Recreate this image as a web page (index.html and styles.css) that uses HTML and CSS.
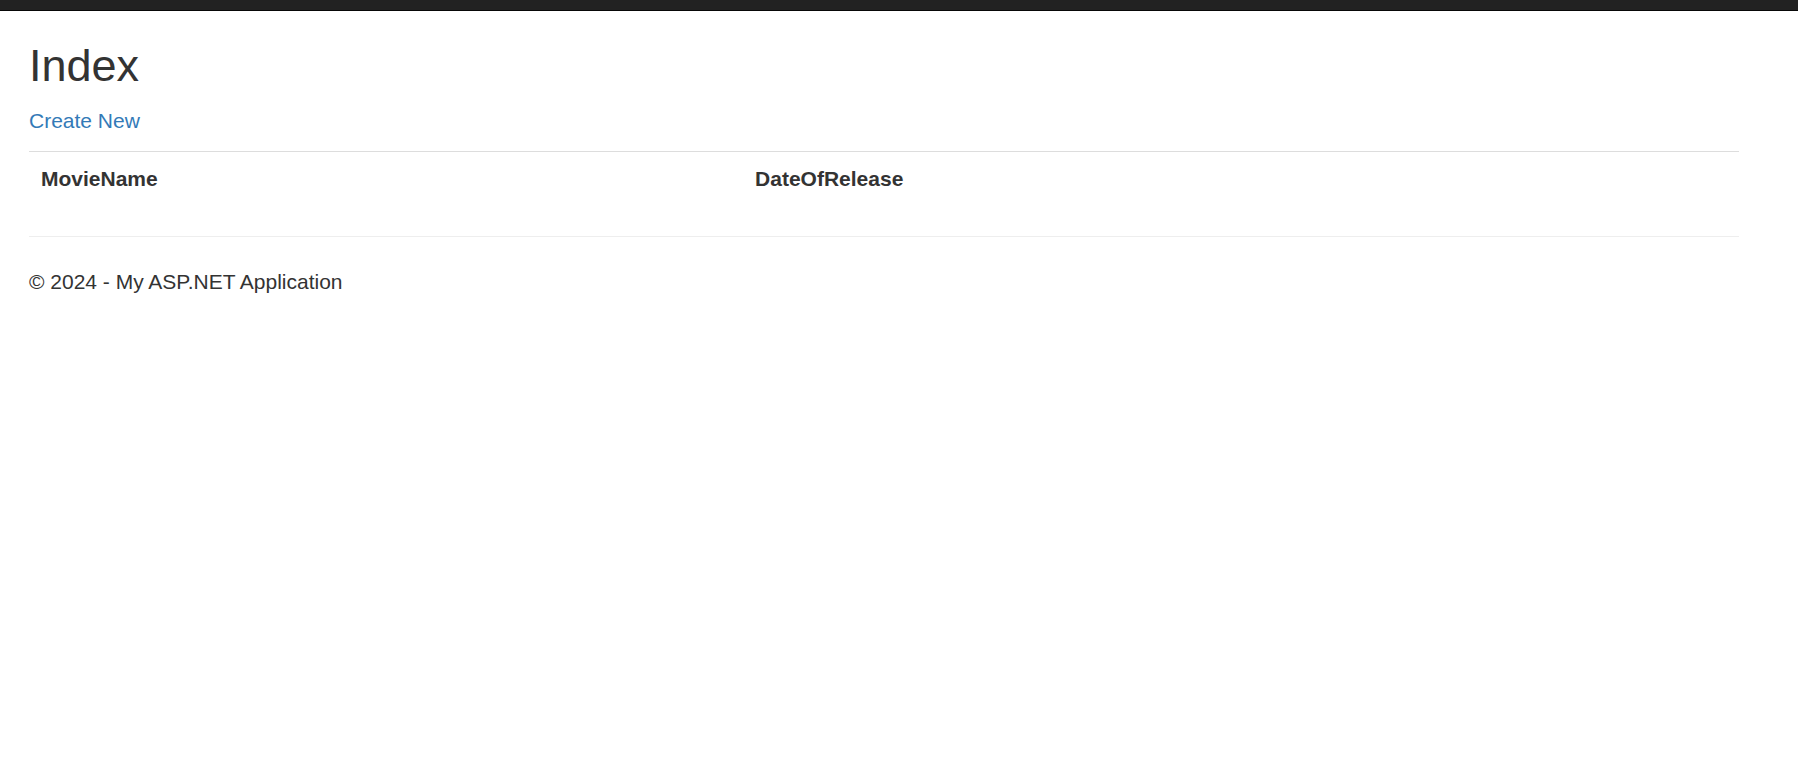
FILE: index.html
```html
<!DOCTYPE html>
<html>
<head>
<meta charset="utf-8">
<title>Index - My ASP.NET Application</title>
<link rel="stylesheet" href="styles.css">
</head>
<body>
<div class="navbar"></div>
<div class="body-content">
  <h2 class="title">Index</h2>
  <p class="actions"><a href="#" class="link">Create New</a></p>
  <table class="table">
    <tr>
      <th>MovieName</th>
      <th>DateOfRelease</th>
      <th></th>
    </tr>
  </table>
  <hr class="rule">
  <footer class="footer">
    <p class="copy">&copy; 2024 - My ASP.NET Application</p>
  </footer>
</div>
</body>
</html>
```

FILE: styles.css
```css
html, body {
  margin: 0;
  padding: 0;
  background: #fff;
}
body {
  font-family: "Liberation Sans", Arial, Helvetica, sans-serif;
  font-size: 21px;
  line-height: 30px;
  color: #333;
}
.navbar {
  height: 10px;
  background: #222;
  border-bottom: 1px solid #080808;
}
.body-content {
  width: 1710px;
  padding-left: 29px;
}
.title {
  margin: 30px 0 15px;
  font-size: 45px;
  font-weight: 500;
  line-height: 49.5px;
  color: #333;
}
.actions {
  margin: 0 0 15px;
}
.link {
  color: #337ab7;
  text-decoration: none;
}
.table {
  width: 100%;
  border-collapse: collapse;
  border-spacing: 0;
  margin-bottom: 30px;
}
.table th {
  text-align: left;
  font-weight: bold;
  vertical-align: top;
  padding: 12px;
  line-height: 30px;
  border-top: 1px solid #ddd;
}
.rule {
  margin: 30px 0;
  border: 0;
  border-top: 1px solid #eee;
  height: 0;
}
.copy {
  margin: 0 0 15px;
}
```
